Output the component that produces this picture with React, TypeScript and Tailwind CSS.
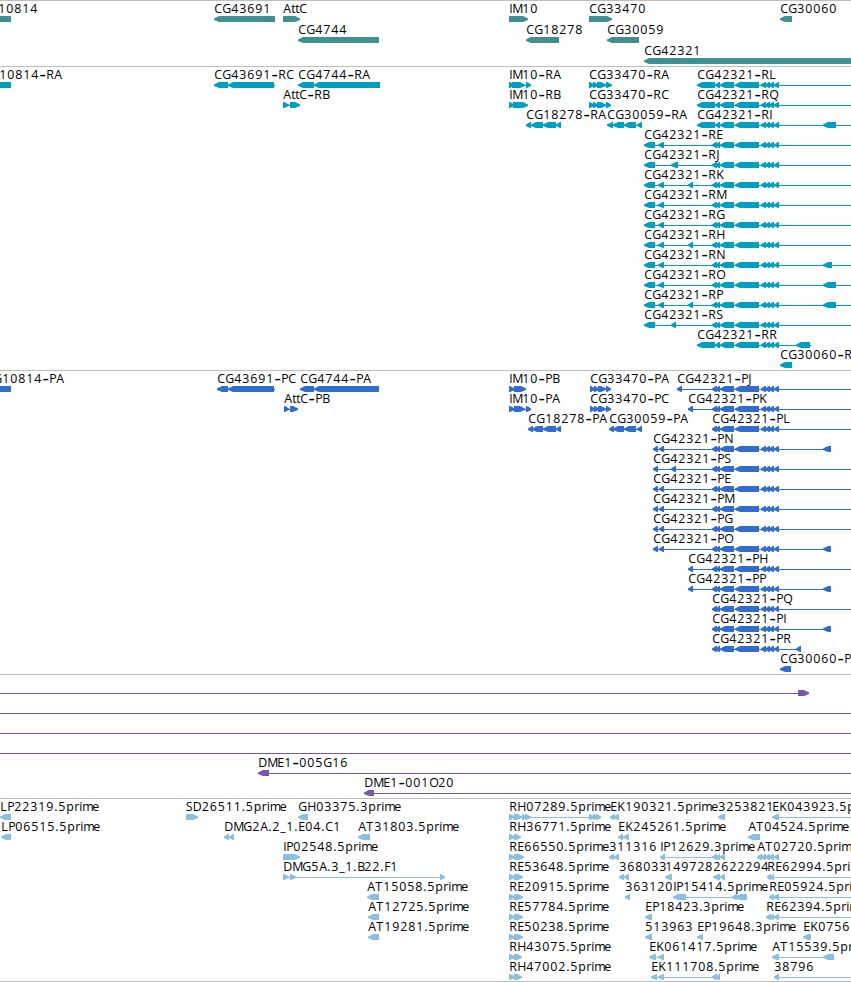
type Segment = [start: number, end: number];

interface Feature {
  name?: string;
  // Left edge of the label; defaults to the first exon's start.
  at?: number;
  dir: 'L' | 'R';
  exons: Segment[];
  // Extent of the thin connector line, when it reaches past the exons.
  span?: Segment;
}

const EDGE = 851;

// Horizontal advance of each glyph on the label grid.
const ADVANCE: Record<string, number> = {
  A: 8, B: 7, C: 8, D: 9, E: 7, F: 6, G: 9, H: 9, I: 3, J: 4, K: 8, L: 7, M: 10,
  N: 9, O: 9, P: 7, Q: 9, R: 8, S: 7, T: 8, t: 4, p: 8, r: 5, i: 3, m: 10, e: 7,
  '.': 4, '-': 7, _: 6,
};

const advance = (text: string) => Array.from(text).reduce((sum, ch) => sum + (ADVANCE[ch] ?? 8), 0);

function glyphPositions(text: string, x: number) {
  return Array.from(text)
    .map((_, i) => x + advance(text.slice(0, i)))
    .join(' ');
}

function exonPath([a, b]: Segment, dir: 'L' | 'R') {
  const tip = Math.min(5, b - a - 1);
  return dir === 'L'
    ? `M${a} 17.4L${a + tip} 15H${b}V21H${a + tip}L${a} 19Z`
    : `M${b} 17.4L${b - tip} 15H${a}V21H${b - tip}L${b} 19Z`;
}

// The hyphen is set larger than its neighbours so that it fills its cell.
function Label({ text, x }: { text: string; x: number }) {
  const cut = text.indexOf('-');
  const head = cut < 0 ? text : text.slice(0, cut);
  const rest = cut < 0 ? '' : text.slice(cut + 1);
  return (
    <text y={12} className="fill-black text-[12.4px]">
      <tspan x={glyphPositions(head, x)}>{head}</tspan>
      {cut >= 0 && (
        <>
          <tspan x={x + advance(head) + 0.3} y={13.7} className="text-[20px]">-</tspan>
          <tspan x={glyphPositions(rest, x + advance(head) + 7)} y={12}>{rest}</tspan>
        </>
      )}
    </text>
  );
}

function Glyph({ f }: { f: Feature }) {
  const points = f.exons.flat();
  const [from, to] = f.span ?? [Math.min(...points), Math.max(...points)];
  return (
    <g>
      <rect x={from} y={18} width={to - from} height={1} fill="currentColor" shapeRendering="crispEdges" />
      {f.exons.map((e, i) => (
        <path key={i} d={exonPath(e, f.dir)} fill="currentColor" />
      ))}
      {f.name && <Label text={f.name} x={(f.at ?? f.exons[0][0]) + 0.2} />}
    </g>
  );
}

function Track({ rows, className, rowClass }: { rows: Feature[][]; className: string; rowClass: string }) {
  return (
    <section className={`flex shrink-0 flex-col border-t border-[#bebebe] ${className}`}>
      {rows.map((row, i) => (
        <svg key={i} className={`block w-full shrink-0 overflow-visible ${rowClass}`}>
          {row.map((f, j) => (
            <Glyph key={j} f={f} />
          ))}
        </svg>
      ))}
    </section>
  );
}

const L = (name: string, exons: Segment[], span?: Segment, at?: number): Feature => ({ name, dir: 'L', exons, span, at });
const R = (name: string, exons: Segment[], span?: Segment, at?: number): Feature => ({ name, dir: 'R', exons, span, at });

const genes: Feature[][] = [
  [
    L('CG10814', [[-19, 11]]),
    L('CG43691', [[214, 275]]),
    R('AttC', [[283, 300]]),
    R('IM10', [[509, 528]]),
    R('CG33470', [[589, 612]]),
    L('CG30060', [[780, 792]]),
  ],
  [L('CG4744', [[298, 379]]), L('CG18278', [[526, 559]]), L('CG30059', [[607, 639]])],
  [L('CG42321', [[644, 860]])],
];

const tail: Segment[] = [[720, 734], [735, 759], [761, 766], [765, 770], [769, 774], [774, 779]];
const longTail: Segment[] = [[697, 715], [715, 720], ...tail];
const shortTail: Segment[] = [[712, 717], [716, 720], ...tail];

const longForm = (name: string, extra: Segment[] = [], end = EDGE) =>
  L(name, [...longTail, ...extra], [697, end]);
const transcript = (name: string, head: Segment[], extra: Segment[] = []) =>
  L(name, [[644, 655], ...head, ...shortTail, ...extra], [644, EDGE]);
const protein = (name: string, head: Segment[], extra: Segment[] = [], end = EDGE) => {
  const exons = [...head, ...shortTail, ...extra];
  return L(name, exons, [exons[0][0], end]);
};

const transcripts: Feature[][] = [
  [
    L('CG10814-RA', [[-19, 11]], undefined, -18),
    L('CG43691-RC', [[214, 228], [228, 274]], [214, 275]),
    L('CG4744-RA', [[298, 314], [314, 380]]),
    R('IM10-RA', [[509, 514], [512, 525], [526, 531]]),
    R('CG33470-RA', [[589, 594], [593, 598], [597, 606], [606, 612]]),
    longForm('CG42321-RL'),
  ],
  [
    R('AttC-RB', [[283, 289], [290, 300]]),
    R('IM10-RB', [[509, 514], [513, 528]]),
    R('CG33470-RC', [[589, 594], [593, 598], [597, 606], [606, 611]]),
    longForm('CG42321-RQ'),
  ],
  [
    L('CG18278-RA', [[526, 531], [531, 543], [543, 556], [556, 561]]),
    L('CG30059-RA', [[607, 613], [613, 624], [624, 636], [637, 642]]),
    longForm('CG42321-RI', [[823, 836]]),
  ],
  [transcript('CG42321-RE', [[658, 664]])],
  [transcript('CG42321-RJ', [[671, 678]])],
  [transcript('CG42321-RK', [[658, 664], [688, 693]])],
  [transcript('CG42321-RM', [[658, 664]])],
  [transcript('CG42321-RG', [[658, 664]])],
  [transcript('CG42321-RH', [[658, 664], [688, 693]])],
  [transcript('CG42321-RN', [[658, 664]], [[823, 832]])],
  [transcript('CG42321-RO', [[658, 664]], [[823, 836]])],
  [transcript('CG42321-RP', [[658, 664], [688, 693]], [[823, 836]])],
  [transcript('CG42321-RS', [[671, 676]])],
  [longForm('CG42321-RR', [[796, 810]], 811)],
  [L('CG30060-RC', [[780, 792]])],
];

const proteins: Feature[][] = [
  [
    L('CG10814-PA', [[-15, 11]]),
    L('CG43691-PC', [[217, 228], [228, 274]], [217, 275]),
    L('CG4744-PA', [[300, 314], [314, 379]]),
    R('IM10-PB', [[509, 515], [514, 526]]),
    R('CG33470-PA', [[590, 595], [594, 599], [598, 606], [606, 611]]),
    protein('CG42321-PJ', [[677, 682]]),
  ],
  [
    R('AttC-PB', [[284, 289], [290, 298]]),
    R('IM10-PA', [[509, 515], [514, 525], [526, 531]]),
    R('CG33470-PC', [[590, 595], [594, 599], [598, 606], [606, 611]]),
    protein('CG42321-PK', [[688, 693]]),
  ],
  [
    L('CG18278-PA', [[528, 533], [532, 543], [543, 556], [556, 561]]),
    L('CG30059-PA', [[609, 614], [613, 624], [624, 636], [637, 642]]),
    protein('CG42321-PL', []),
  ],
  [protein('CG42321-PN', [[653, 658], [659, 664]], [[823, 831]], 831)],
  [protein('CG42321-PS', [[653, 658], [671, 676]])],
  [protein('CG42321-PE', [[653, 658], [659, 664]])],
  [protein('CG42321-PM', [[653, 658], [659, 664]])],
  [protein('CG42321-PG', [[653, 658], [659, 664]])],
  [protein('CG42321-PO', [[653, 658], [659, 664]], [[823, 831]], 831)],
  [protein('CG42321-PH', [[688, 693]])],
  [protein('CG42321-PP', [[688, 693]], [[823, 831]], 831)],
  [protein('CG42321-PQ', [])],
  [protein('CG42321-PI', [], [[823, 831]], 831)],
  [protein('CG42321-PR', [], [[796, 801]], 801)],
  [L('CG30060-PC', [[780, 791]])],
];

const clones: Feature[][] = [
  [R('', [[798, 809]], [0, 809])],
  [R('', [], [0, EDGE])],
  [R('', [], [0, EDGE])],
  [R('', [], [0, EDGE])],
  [L('DME1-005G16', [[258, 269]], [258, EDGE])],
  [L('DME1-001O20', [[364, 374]], [364, EDGE])],
];

const reads: Feature[][] = [
  [
    L('LP22319.5prime', [[0, 11]]),
    R('SD26511.5prime', [[186, 198]], undefined, 185.5),
    L('GH03375.3prime', [[298, 308]]),
    R('RH07289.5prime', [[509, 515], [514, 522], [522, 526], [525, 531], [589, 594], [593, 597], [596, 601]]),
    L('EK190321.5prime', [[610, 615], [614, 619]]),
    L('3253821', [[718, 725]]),
    L('EK043923.5prime', [[772, 779]], [772, EDGE]),
  ],
  [
    L('LP06515.5prime', [[1, 11]]),
    L('DMG2A.2_1.E04.C1', [[224, 229], [229, 234]]),
    L('AT31803.5prime', [[358, 370]]),
    R('RH36771.5prime', [[509, 515], [514, 521]]),
    L('EK245261.5prime', [[618, 623], [623, 629]]),
    L('AT04524.5prime', [[748, 760]]),
  ],
  [
    R('IP02548.5prime', [[283, 300]]),
    R('RE66550.5prime', [[509, 515], [514, 524]]),
    L('311316', [[609, 614], [614, 619]]),
    L('IP12629.3prime', [[660, 665], [712, 717], [716, 720], [720, 725]]),
    L('AT02720.5prime', [[757, 762], [761, 766], [765, 770], [769, 774], [774, 779]]),
  ],
  [
    R('DMG5A.3_1.B22.F1', [[283, 289], [290, 296], [440, 445]]),
    R('RE53648.5prime', [[509, 515], [514, 523]]),
    L('368033', [[619, 624], [624, 629]]),
    L('149728', [[665, 672]]),
    L('2622294', [[713, 720], [720, 725]]),
    L('RE62994.5prime', [[767, 771], [770, 774]], [767, EDGE]),
  ],
  [
    L('AT15058.5prime', [[367, 379]]),
    R('RE20915.5prime', [[509, 515], [514, 523]]),
    L('363120', [[625, 630]]),
    L('IP15414.5prime', [[673, 686], [732, 737], [735, 747]]),
    L('RE05924.5prime', [[769, 774], [773, 779]], [769, EDGE]),
  ],
  [
    L('AT12725.5prime', [[368, 379]]),
    R('RE57784.5prime', [[509, 515], [514, 523]]),
    L('EP18423.3prime', [[645, 652]]),
    L('RE62394.5prime', [[766, 771], [770, 774], [774, 779]], [766, EDGE]),
  ],
  [
    L('AT19281.5prime', [[368, 379]]),
    R('RE50238.5prime', [[509, 515], [514, 523]]),
    L('513963', [[645, 652]]),
    L('EP19648.3prime', [[697, 703]]),
    L('EK0756', [[803, 811]]),
  ],
  [
    R('RH43075.5prime', [[509, 515], [514, 522]]),
    L('EK061417.5prime', [[649, 656], [658, 664]]),
    L('AT15539.5prime', [[772, 779], [823, 834]]),
  ],
  [
    R('RH47002.5prime', [[509, 515], [514, 522]]),
    L('EK111708.5prime', [[651, 657], [658, 664], [712, 717], [716, 720]]),
    L('38796', [[774, 779]], [774, EDGE]),
  ],
];

export default function App() {
  return (
    <main className="flex h-[982px] w-[851px] flex-col overflow-hidden border-b border-[#bebebe] bg-white font-['Open_Sans','Noto_Sans',sans-serif]">
      <Track rows={genes} className="h-[66px] text-[#3f8f94]" rowClass="h-[21px]" />
      <Track rows={transcripts} className="h-[304px] text-[#009fc0]" rowClass="h-5" />
      <Track rows={proteins} className="h-[304px] text-[#316dcd]" rowClass="h-5" />
      <Track rows={clones} className="h-[124px] text-[#7859a8]" rowClass="h-5" />
      <Track rows={reads} className="h-[183px] text-[#8abfdf]" rowClass="h-5" />
    </main>
  );
}
